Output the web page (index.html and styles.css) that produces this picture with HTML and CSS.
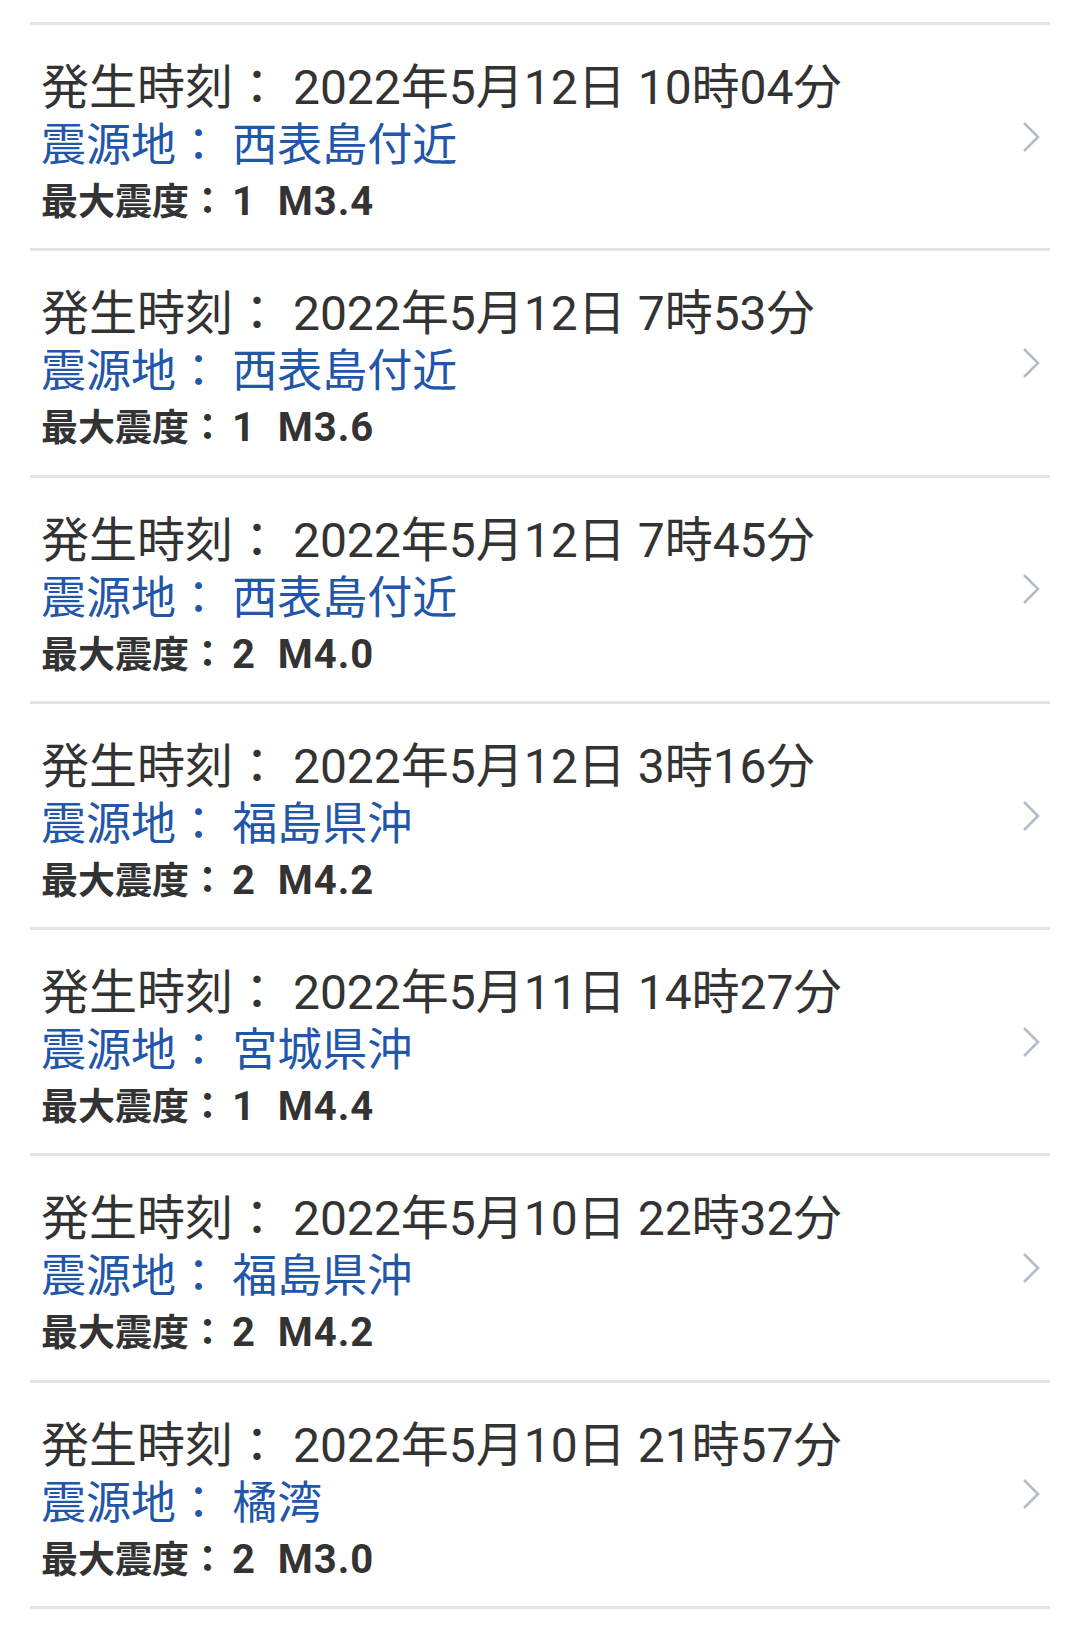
FILE: index.html
```html
<!DOCTYPE html>
<html lang="ja">
<head>
<meta charset="utf-8">
<title>地震情報</title>
<link rel="stylesheet" href="styles.css">
</head>
<body>
<ul class="list">
  <li class="item">
    <div class="info">
      <div class="time">発生時刻： 2022年5月12日 10時04分</div>
      <div class="place">震源地： 西表島付近</div>
      <div class="scale">最大震度：<span class="num"> 1  M3.4</span></div>
    </div>
    <svg class="chev" viewBox="0 0 18 32" width="18" height="32"><polyline points="2,2 16,16 2,30"/></svg>
  </li>
  <li class="item">
    <div class="info">
      <div class="time">発生時刻： 2022年5月12日 7時53分</div>
      <div class="place">震源地： 西表島付近</div>
      <div class="scale">最大震度：<span class="num"> 1  M3.6</span></div>
    </div>
    <svg class="chev" viewBox="0 0 18 32" width="18" height="32"><polyline points="2,2 16,16 2,30"/></svg>
  </li>
  <li class="item">
    <div class="info">
      <div class="time">発生時刻： 2022年5月12日 7時45分</div>
      <div class="place">震源地： 西表島付近</div>
      <div class="scale">最大震度：<span class="num"> 2  M4.0</span></div>
    </div>
    <svg class="chev" viewBox="0 0 18 32" width="18" height="32"><polyline points="2,2 16,16 2,30"/></svg>
  </li>
  <li class="item">
    <div class="info">
      <div class="time">発生時刻： 2022年5月12日 3時16分</div>
      <div class="place">震源地： 福島県沖</div>
      <div class="scale">最大震度：<span class="num"> 2  M4.2</span></div>
    </div>
    <svg class="chev" viewBox="0 0 18 32" width="18" height="32"><polyline points="2,2 16,16 2,30"/></svg>
  </li>
  <li class="item">
    <div class="info">
      <div class="time">発生時刻： 2022年5月11日 14時27分</div>
      <div class="place">震源地： 宮城県沖</div>
      <div class="scale">最大震度：<span class="num"> 1  M4.4</span></div>
    </div>
    <svg class="chev" viewBox="0 0 18 32" width="18" height="32"><polyline points="2,2 16,16 2,30"/></svg>
  </li>
  <li class="item">
    <div class="info">
      <div class="time">発生時刻： 2022年5月10日 22時32分</div>
      <div class="place">震源地： 福島県沖</div>
      <div class="scale">最大震度：<span class="num"> 2  M4.2</span></div>
    </div>
    <svg class="chev" viewBox="0 0 18 32" width="18" height="32"><polyline points="2,2 16,16 2,30"/></svg>
  </li>
  <li class="item">
    <div class="info">
      <div class="time">発生時刻： 2022年5月10日 21時57分</div>
      <div class="place">震源地： 橘湾</div>
      <div class="scale">最大震度：<span class="num"> 2  M3.0</span></div>
    </div>
    <svg class="chev" viewBox="0 0 18 32" width="18" height="32"><polyline points="2,2 16,16 2,30"/></svg>
  </li>
</ul>
</body>
</html>
```
FILE: styles.css
```css
html, body {
  margin: 0;
  padding: 0;
  background: #ffffff;
}

body {
  font-family: Roboto, "Noto Sans CJK JP", sans-serif;
  color: #333333;
}

.list {
  list-style: none;
  margin: 22px 30px 0 30px;
  padding: 0;
  border-top: 3px solid #e5e5e5;
}

.item {
  display: flex;
  align-items: center;
  justify-content: space-between;
  height: 223.3px;
  border-bottom: 3px solid #e5e5e5;
  padding: 0 10px 0 11px;
}

.info {
  align-self: stretch;
  display: flex;
  flex-direction: column;
  padding-top: 33px;
}

.time {
  font-size: 48px;
  height: 60px;
  line-height: 60px;
  white-space: pre;
}

.place {
  font-size: 45px;
  height: 55px;
  line-height: 55px;
  color: #2256a8;
  white-space: pre;
}

.scale {
  font-size: 37px;
  height: 57px;
  line-height: 57px;
  font-weight: 700;
  white-space: pre;
}

.num {
  font-size: 40px;
  letter-spacing: 1px;
  margin-left: -5px;
}

.chev {
  flex: none;
  fill: none;
  stroke: #b3bdc8;
  stroke-width: 2.6;
}
```
